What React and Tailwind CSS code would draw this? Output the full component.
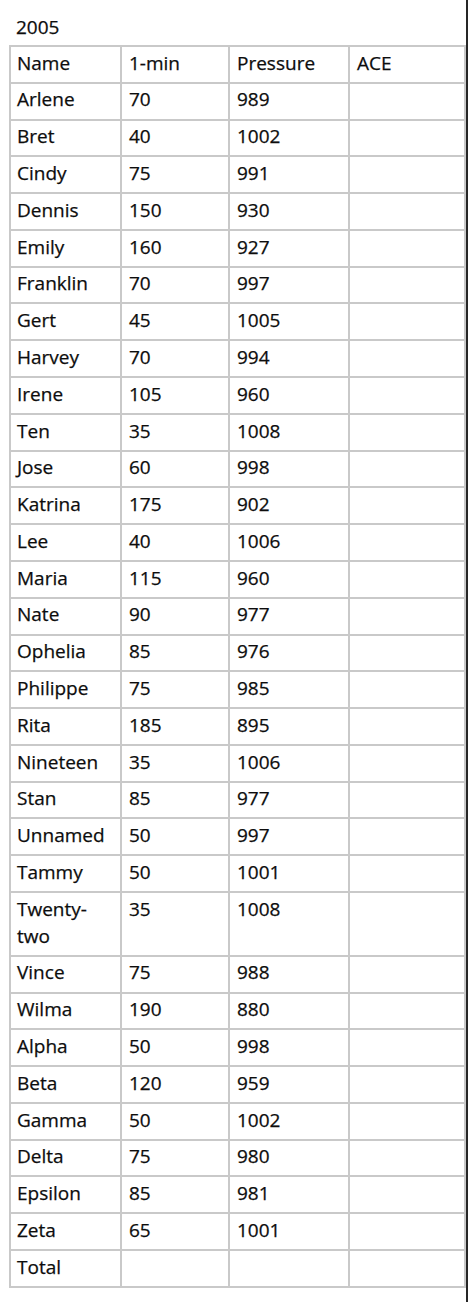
import React from 'react';

const ROWS = [
  ['Arlene', '70', '989'],
  ['Bret', '40', '1002'],
  ['Cindy', '75', '991'],
  ['Dennis', '150', '930'],
  ['Emily', '160', '927'],
  ['Franklin', '70', '997'],
  ['Gert', '45', '1005'],
  ['Harvey', '70', '994'],
  ['Irene', '105', '960'],
  ['Ten', '35', '1008'],
  ['Jose', '60', '998'],
  ['Katrina', '175', '902'],
  ['Lee', '40', '1006'],
  ['Maria', '115', '960'],
  ['Nate', '90', '977'],
  ['Ophelia', '85', '976'],
  ['Philippe', '75', '985'],
  ['Rita', '185', '895'],
  ['Nineteen', '35', '1006'],
  ['Stan', '85', '977'],
  ['Unnamed', '50', '997'],
  ['Tammy', '50', '1001'],
  ['Twenty-two', '35', '1008'],
  ['Vince', '75', '988'],
  ['Wilma', '190', '880'],
  ['Alpha', '50', '998'],
  ['Beta', '120', '959'],
  ['Gamma', '50', '1002'],
  ['Delta', '75', '980'],
  ['Epsilon', '85', '981'],
  ['Zeta', '65', '1001'],
  ['Total', '', ''],
];

// 单元格：右、下边框，左上由外框提供
function Cell({ children, first }) {
  return (
    <div
      className={[
        'border-r-2 border-b-2 border-[#c9c9c9] pt-[2.7px] pb-[5.1px] leading-[27px]',
        first ? 'pl-[6px] pr-[4px]' : 'pl-[7px]',
      ].join(' ')}
    >
      {children}
    </div>
  );
}

export default function App() {
  return (
    <div
      className="w-[468px] h-[1302px] bg-white border-r-2 border-[#262626] text-[19px] text-[#0d0d0d] [-webkit-text-stroke:0.25px_#0d0d0d]"
      style={{ fontFamily: '"Open Sans", "Noto Sans", sans-serif' }}
    >
      {/* 标题 */}
      <div className="pl-[16px] pt-[14px] h-[45px] leading-[27px]">2005</div>

      {/* 表格 */}
      <div className="ml-[9px] w-[457px] grid grid-cols-[111px_108px_120px_116px] border-l-2 border-t-2 border-[#c9c9c9]">
        <Cell first>Name</Cell>
        <Cell>1-min</Cell>
        <Cell>Pressure</Cell>
        <Cell>ACE</Cell>
        {ROWS.map(([name, wind, pres]) => (
          <React.Fragment key={name}>
            <Cell first>{name === 'Twenty-two' ? <>Twenty-<br />two</> : name}</Cell>
            <Cell>{wind}</Cell>
            <Cell>{pres}</Cell>
            <Cell />
          </React.Fragment>
        ))}
      </div>
    </div>
  );
}
